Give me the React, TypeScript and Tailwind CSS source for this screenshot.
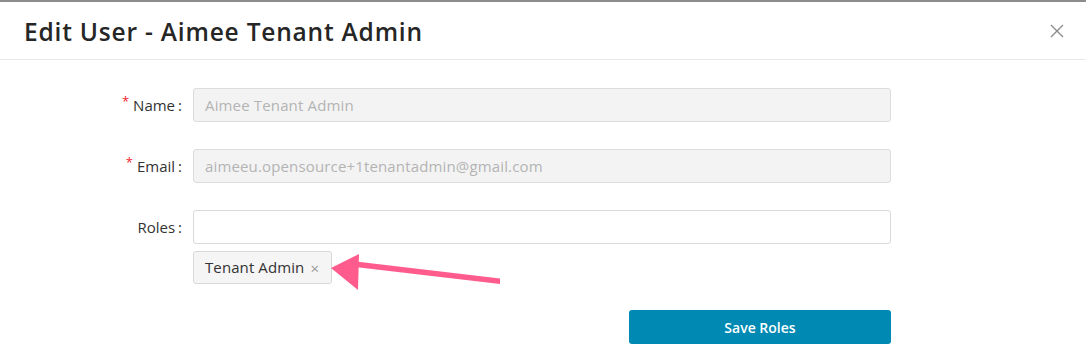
import React from "react";

const font = { fontFamily: '"Open Sans", "Liberation Sans", sans-serif' };

function Label({ text, required }: { text: string; required?: boolean }) {
  return (
    <div className="flex w-[185px] shrink-0 items-center justify-end pr-[3px] text-[15px] text-[#333]">
      {required && <span className="mr-[4px] -mt-[6px] text-[13px] text-[#f5222d]">*</span>}
      <span>{text}</span>
      <span className="ml-[3px]">:</span>
    </div>
  );
}

function ReadOnlyInput({ value }: { value: string }) {
  return (
    <div className="flex h-[34px] flex-1 items-center rounded-[3px] border border-[#dcdcdc] bg-[#f3f3f3] px-[11px] text-[15px] tracking-[0.15px] text-[#b3b3b3]">
      {value}
    </div>
  );
}

function Arrow() {
  return (
    <svg className="absolute left-[328px] top-[252px]" width="176" height="40" viewBox="0 0 176 40">
      <path d="M172 32 L27 15 L28 9.5 L172 26.5 Z" fill="#ff5c8d" />
      <path d="M3 16 L31 2 L30 38 Z" fill="#ff5c8d" />
    </svg>
  );
}

export default function App() {
  return (
    <div className="relative h-[362px] w-[1086px] overflow-hidden bg-white" style={font}>
      <div className="h-[2px] bg-[#8c8c8c]" />
      <header className="flex h-[58px] items-center justify-between border-b border-[#e9e9e9] pl-[24px] pr-[22px]">
        <h1 className="mt-[3px] text-[24.5px] font-semibold tracking-[0.8px] text-[#262626]">Edit User - Aimee Tenant Admin</h1>
        <svg width="14" height="14" viewBox="0 0 14 14" className="mt-[1px]">
          <path d="M1 1 L13 13 M13 1 L1 13" stroke="#8a8a8a" strokeWidth="1.4" />
        </svg>
      </header>

      <div className="flex w-[891px] flex-col pt-[28px]">
        <div className="flex items-center gap-[8px]">
          <Label text="Name" required />
          <ReadOnlyInput value="Aimee Tenant Admin" />
        </div>
        <div className="mt-[27px] flex items-center gap-[8px]">
          <Label text="Email" required />
          <ReadOnlyInput value="aimeeu.opensource+1tenantadmin@gmail.com" />
        </div>
        <div className="mt-[27px] flex items-start gap-[8px]">
          <div className="flex h-[34px] items-center">
            <Label text="Roles" />
          </div>
          <div className="flex flex-1 flex-col gap-[7px]">
            <div className="h-[34px] rounded-[3px] border border-[#d9d9d9] bg-white" />
            <div>
              <span className="inline-flex h-[33px] items-center rounded-[3px] border border-[#d9d9d9] bg-[#f5f5f5] pl-[11px] pr-[12px] text-[15px] tracking-[0.1px] text-[#333]">
                Tenant Admin
                <span className="ml-[6px] mt-[2px] text-[15px] text-[#999]">×</span>
              </span>
            </div>
          </div>
        </div>
        <div className="mt-[26px] flex justify-end">
          <button className="h-[34px] w-[262px] rounded-[3px] bg-[#0089b3] text-[14px] font-semibold text-white">
            Save Roles
          </button>
        </div>
      </div>
      <Arrow />
    </div>
  );
}
